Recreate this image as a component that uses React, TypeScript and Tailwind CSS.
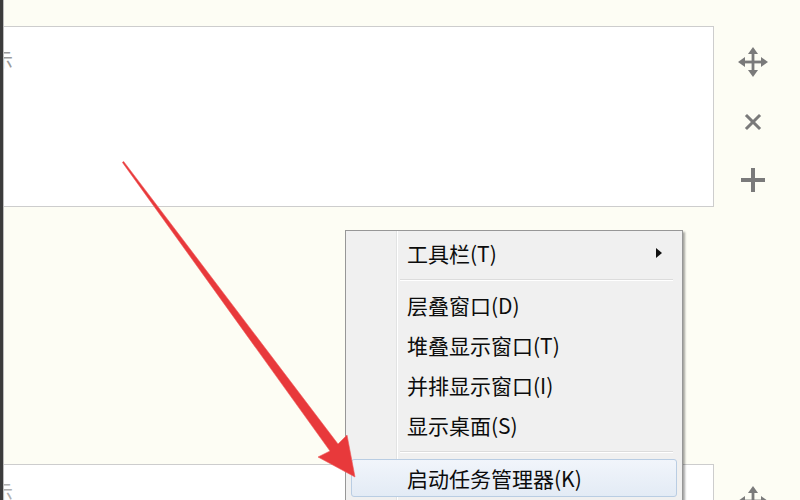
import React from "react";

const MENU_FONT = { fontFamily: '"Noto Sans CJK SC", "Microsoft YaHei", sans-serif' };

function MoveIcon() {
  return (
    <svg width="32" height="32" viewBox="0 0 32 32" fill="#7a7a7a">
      <rect x="14.6" y="6" width="2.8" height="20" />
      <rect x="6" y="14.6" width="20" height="2.8" />
      <polygon points="16,1 21,8 11,8" />
      <polygon points="16,31 21,24 11,24" />
      <polygon points="1,16 8,11 8,21" />
      <polygon points="31,16 24,11 24,21" />
    </svg>
  );
}

function CloseIcon() {
  return (
    <svg width="20" height="20" viewBox="0 0 20 20" stroke="#7a7a7a" strokeWidth="3" strokeLinecap="square">
      <line x1="4" y1="4" x2="16" y2="16" />
      <line x1="16" y1="4" x2="4" y2="16" />
    </svg>
  );
}

function PlusIcon() {
  return (
    <svg width="26" height="26" viewBox="0 0 26 26" fill="#7a7a7a">
      <rect x="11" y="1" width="4" height="24" />
      <rect x="1" y="11" width="24" height="4" />
    </svg>
  );
}

interface ItemProps {
  label: string;
  submenu?: boolean;
}

function MenuItem({ label, submenu }: ItemProps) {
  return (
    <div className="flex items-center h-[40px] pl-[61px] pr-[20px] text-[21px] text-[#0c0c0c]">
      <span className="flex-1 leading-none">{label}</span>
      {submenu && (
        <svg width="6" height="10" viewBox="0 0 6 10">
          <polygon points="0,0 6,5 0,10" fill="#111" />
        </svg>
      )}
    </div>
  );
}

function Separator() {
  return (
    <div className="pl-[54px] pr-[9px] py-[6px]">
      <div className="h-px bg-[#dcdcdc]" />
      <div className="h-px bg-white" />
    </div>
  );
}

function ContextMenu() {
  return (
    <div
      className="absolute left-[345px] top-[230px] w-[338px] h-[290px] bg-[#f0f0f0] border border-[#979797] shadow-[2px_2px_2px_rgba(0,0,0,0.35)]"
      style={MENU_FONT}
    >
      <div className="absolute left-[50px] top-0 bottom-0 w-px bg-[#e2e3e3]" />
      <div className="absolute left-[51px] top-0 bottom-0 w-px bg-white" />
      <div className="relative pt-[2px]">
        <MenuItem label="工具栏(T)" submenu />
        <Separator />
        <div className="-mt-[2px]">
          <MenuItem label="层叠窗口(D)" />
          <MenuItem label="堆叠显示窗口(T)" />
          <MenuItem label="并排显示窗口(I)" />
          <MenuItem label="显示桌面(S)" />
        </div>
        <Separator />
        <div className="mx-[5px] h-[38px] flex items-center pl-[55px] text-[21px] text-[#0c0c0c] rounded-[3px] border border-[#b9cde3] bg-gradient-to-b from-[#f1f5fb] to-[#e3ebf5]">
          <span className="leading-none">启动任务管理器(K)</span>
        </div>
      </div>
    </div>
  );
}

function RedArrow() {
  return (
    <svg className="absolute inset-0 pointer-events-none" width="800" height="500" viewBox="0 0 800 500">
      <polygon
        points="123.6,161.4 338,444 347,435 355,477 318,457 330,451 122.4,162.4"
        fill="#e8393b"
        stroke="#ee5a5a"
        strokeWidth="0.6"
        strokeLinejoin="round"
      />
    </svg>
  );
}

export default function App() {
  return (
    <div className="relative w-[800px] h-[500px] overflow-hidden bg-[#fdfdf4] flex">
      <div className="w-[3px] shrink-0 bg-[#3b3b3b]" />
      <div className="w-px shrink-0 bg-[#bdbdbd]" />

      <div className="w-[710px] shrink-0 flex flex-col">
        <div className="shrink-0 mt-[26px] h-[181px] bg-white border border-l-0 border-[#cdcdcd] overflow-hidden">
          <div className="-ml-[11px] mt-[18px] text-[20px] text-[#9a9a9a]" style={MENU_FONT}>
            示
          </div>
        </div>
        <div className="shrink-0 mt-[257px] h-[60px] bg-white border border-l-0 border-[#cdcdcd] overflow-hidden">
          <div className="-ml-[11px] mt-[12px] text-[20px] text-[#b0b0b0]" style={MENU_FONT}>
            示
          </div>
        </div>
      </div>

      <div className="w-[78px] shrink-0 flex flex-col items-center">
        <div className="shrink-0 mt-[46px] h-[32px] flex items-center justify-center">
          <MoveIcon />
        </div>
        <div className="shrink-0 mt-[28px] h-[32px] flex items-center justify-center">
          <CloseIcon />
        </div>
        <div className="shrink-0 mt-[26px] h-[32px] flex items-center justify-center">
          <PlusIcon />
        </div>
        <div className="shrink-0 mt-[289px] h-[32px] flex items-center justify-center">
          <MoveIcon />
        </div>
      </div>

      <ContextMenu />
      <RedArrow />
    </div>
  );
}
